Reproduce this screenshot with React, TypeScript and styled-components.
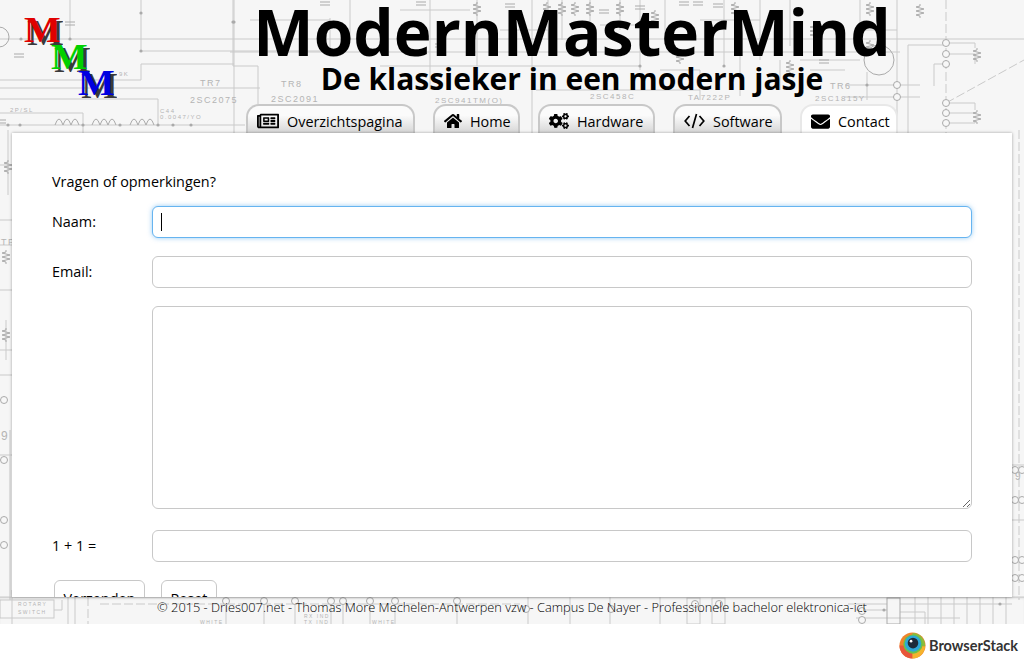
import React from 'react';
import styled, { createGlobalStyle } from 'styled-components';
import { FaRegNewspaper, FaHome, FaCogs, FaEnvelope } from 'react-icons/fa';

const GlobalStyle = createGlobalStyle`
    html, body {
        margin: 0;
        padding: 0;
        height: 664px;
        overflow: hidden;
        background: #fff;
        color: #000;
        font-family: "Open Sans", "Liberation Sans", sans-serif;
        font-size: 14.4px;
    }
`

// schematic wires: x1 y1 x2 y2
const wires = [
    [0,39,1024,39],[70,0,70,39],[141,0,141,51],[141,51,340,51],[0,88,260,88],[0,80,141,80],[141,64,141,80],[141,64,234,64],
    [234,0,234,134],[0,99,158,99],[158,99,158,125],[0,113,83,113],[83,113,83,134],[0,125,245,125],
    [233,0,233,66],[233,66,258,66],[258,66,258,104],[230,52,900,52],[330,18,330,50],[532,0,532,134],[430,0,430,52],
    [477,0,477,66],[548,0,548,40],[562,0,562,40],[590,0,590,40],[620,0,620,30],[380,66,532,66],[532,66,640,66],
    [640,0,640,70],[665,0,665,44],[700,20,760,20],[724,0,724,66],[760,0,760,60],[790,0,790,46],[800,60,860,60],
    [845,85,920,85],[845,97,920,97],[867,72,867,100],[897,0,897,134],[908,45,908,134],[908,45,946,45],
    [946,43,975,43],[946,54,975,54],[946,64,934,64],[934,64,934,86],[975,43,975,48],[975,54,975,64],
    [946,103,975,103],[946,113,975,113],[946,123,975,123],[975,103,975,110],[975,122,975,123],
    [250,20,330,20],[350,0,350,40],[400,10,470,10],[500,30,548,30],[600,25,640,25],[660,70,700,70],[700,70,700,100],
    [740,50,740,96],[780,60,780,90],[810,70,845,70],[860,0,860,30],[860,30,897,30],[430,52,430,90],[536,90,700,90],
    [0,220,12,220],[0,245,12,245],[0,350,12,350],[0,455,12,455],[8,130,8,195],[6,320,6,360],[10,430,10,600],
    [1012,465,1024,465],[1012,520,1024,520],[0,165,12,165],[0,290,12,290],[0,375,12,375],
    [0,597,1024,597],[12,590,12,624],[54,610,62,610],[62,600,62,610],[68,597,68,624],[75,597,75,624],
    [226,597,226,624],[264,597,264,624],[295,597,295,624],[331,597,331,624],[343,597,343,624],[370,597,370,624],
    [395,597,395,624],[457,597,457,624],[528,597,528,624],[570,597,570,624],[610,597,610,624],[660,597,660,624],
    [900,604,1012,604],[915,597,915,624],[928,597,928,624],[941,597,941,624],[954,597,954,624],[967,597,967,624],
    [980,597,980,624],[993,597,993,624],[1006,597,1006,624],[848,604,887,604],[856,618,960,618],[855,610,887,610],
    [900,612,925,612],[925,612,925,624],
]

const dashed = [
    [946,0,946,134],[946,103,1024,60],[1019,130,1019,600],[88,597,88,624],[100,604,226,604],[226,604,520,604],
]

// small open nodes
const nodes = [
    [946,43],[946,54],[946,64],[946,103],[946,113],[946,123],[897,85],[897,97],
    [226,601],[264,601],[295,601],[331,601],[343,601],[370,601],[395,601],[457,601],[526,609],[611,609],[695,604],[719,604],[862,611],[862,620],
    [4,400],[4,460],[4,520],[4,545],[1015,470],[1022,470],[1015,500],[1022,500],[1015,560],[1015,578],[1022,560],[1022,578],
]

const dots = [[70,39],[141,13],[141,51],[234,22],[21,39],[8,125],[20,125],[83,125],[120,125],[158,125],[173,125],[191,125],[233,22],[640,66],[724,66],[867,85],[1000,604],[884,610]]

const resistors = [
    [477,2],[547,2],[562,2],[575,2],[590,2],[620,2],[870,2],[920,4],[814,24],[655,10],[977,48],[977,110],[8,160],[6,250],[6,328],[680,50],[870,40],[735,2],[790,60],
]

const caps = [[70,22],[19,54],[421,2],[325,2],[510,4],[640,6],[684,2],[698,2],[718,4],[440,44],[604,10],[824,60],[1,120]]

const labels: [number, number, string, number][] = [
    [200,86,'TR7',9],[190,103,'2SC2075',9],[281,87,'TR8',9],[271,102,'2SC2091',9],[435,103,'2SC941TM(O)',8],
    [590,99,'2SC458C',8],[688,100,'TA7222P',8],[815,101,'2SC1815Y',8],[830,89,'TR6',9],[160,113,'C44',6],
    [160,119,'0.0047/YO',6],[10,112,'2P/SL',6],[119,76,'9K',6],
    [18,606,'ROTARY',5],[18,614,'SWITCH',5],[304,618,'RX IND',5],[304,624,'TX IND',5],[200,624,'WHITE',5],[372,624,'WHITE',5],
    [1,440,'9',12],[1015,480,'9',10],[1,245,'TP',9],[246,122,'C46',6],
]

const resistorPath = (x: number, y: number) =>
    `M${x} ${y} l0 2 l-4 1 l8 2 l-8 2 l8 2 l-8 2 l4 1 l0 2`

const Schematic = () => (
    <BackgroundSvg width="1024" height="624" viewBox="0 0 1024 624">
        <g stroke="#cacaca" fill="none" strokeWidth="1">
            {wires.map((w, i) => <line key={i} x1={w[0]} y1={w[1]} x2={w[2]} y2={w[3]} />)}
            {dashed.map((w, i) => <line key={i} x1={w[0]} y1={w[1]} x2={w[2]} y2={w[3]} strokeDasharray="9 3" />)}
            {resistors.map((r, i) => <path key={i} d={resistorPath(r[0], r[1])} stroke="#aaa" />)}
            {caps.map((c, i) => (
                <path key={i} d={`M${c[0] - 5} ${c[1]} h10 M${c[0] - 5} ${c[1] + 3} h10`} stroke="#aaa" />
            ))}
            <circle cx="-1" cy="37" r="10" stroke="#aaa" />
            <circle cx="495" cy="124" r="11" />
            <circle cx="879" cy="60" r="15" stroke="#aaa" />
            <path d="M55 125 q4 -12 8 0 q4 -12 8 0 q4 -12 8 0 M92 125 q4 -12 8 0 q4 -12 8 0 q4 -12 8 0 M130 125 q4 -12 8 0 q4 -12 8 0 q4 -12 8 0" stroke="#aaa" />
            <rect x="0" y="600" width="54" height="18" />
            <rect x="687" y="598" width="13" height="26" />
            <rect x="712" y="598" width="13" height="26" />
            <rect x="887" y="598" width="13" height="26" stroke="#aaa" />
            {nodes.map((n, i) => <circle key={i} cx={n[0]} cy={n[1]} r="3.5" fill="#f7f7f7" stroke="#aaa" />)}
            {dots.map((d, i) => <circle key={i} cx={d[0]} cy={d[1]} r="1.6" fill="#aaa" stroke="none" />)}
        </g>
        <g fill="#b4b4b4" fontFamily="'Liberation Sans', sans-serif" letterSpacing="1.5">
            {labels.map((l, i) => <text key={i} x={l[0]} y={l[1]} fontSize={l[3]}>{l[2]}</text>)}
        </g>
    </BackgroundSvg>
)

const Logo = () => (
    <LogoBox>
        <LogoLetter $color="#e00000" $indent={0}>M</LogoLetter>
        <LogoLetter $color="#00d000" $indent={27}>M</LogoLetter>
        <LogoLetter $color="#0000e0" $indent={54}>M</LogoLetter>
    </LogoBox>
)

const CodeIcon = () => (
    <svg width="21" height="16" viewBox="0 0 21 16" fill="none" stroke="#000" strokeWidth="1.7">
        <path d="M5.5 3 L1.2 8 L5.5 13 M15.5 3 L19.8 8 L15.5 13 M12.5 1 L8.5 15" />
    </svg>
)

const tabs = [
    { label: 'Overzichtspagina', width: 169, icon: <FaRegNewspaper size={22} /> },
    { label: 'Home', width: 87, icon: <FaHome size={18} /> },
    { label: 'Hardware', width: 117, icon: <FaCogs size={20} /> },
    { label: 'Software', width: 109, icon: <CodeIcon /> },
    { label: 'Contact', width: 98, icon: <FaEnvelope size={19} />, active: true },
]

const BrowserStackMark = () => (
    <svg width="27" height="27" viewBox="0 0 28 28">
        <circle cx="14" cy="14" r="13.5" fill="#f0842c" />
        <path d="M14 1 a13 13 0 0 1 13 14 L14 14 Z" fill="#8dbb3c" />
        <path d="M14 27.5 a13.5 13.5 0 0 1 -13.5 -13.5 L14 14 Z" fill="#e8563a" />
        <path d="M27 15 a13.5 13.5 0 0 1 -13 12.5 L14 14 Z" fill="#f5b32c" />
        <circle cx="14.5" cy="12.5" r="10" fill="#6cc04a" />
        <circle cx="14.5" cy="12" r="8.5" fill="#2da8d8" />
        <circle cx="14.5" cy="11.5" r="5.5" fill="#1d2b3a" />
        <circle cx="12.5" cy="9.5" r="1.4" fill="#fff" />
    </svg>
)

export default function App() {
    return (
        <>
            <GlobalStyle />
            <Page>
                <Schematic />
                <Header>
                    <Logo />
                    <HeaderCenter>
                        <Title>ModernMasterMind</Title>
                        <Subtitle>De klassieker in een modern jasje</Subtitle>
                        <Tabs>
                            {tabs.map(t => (
                                <Tab key={t.label} $active={!!t.active} $width={t.width}>
                                    {t.icon}
                                    {t.label}
                                </Tab>
                            ))}
                        </Tabs>
                    </HeaderCenter>
                </Header>
                <Main>
                    <Intro>Vragen of opmerkingen?</Intro>
                    <Row>
                        <Label>Naam:</Label>
                        <FocusBox>
                            <Input $focused />
                            <Caret />
                        </FocusBox>
                    </Row>
                    <Row>
                        <Label>Email:</Label>
                        <Input />
                    </Row>
                    <Row>
                        <Label />
                        <TextArea />
                    </Row>
                    <Row>
                        <Label>1 + 1 =</Label>
                        <Input />
                    </Row>
                    <Buttons>
                        <Button type="button">Verzenden</Button>
                        <Button type="button">Reset</Button>
                    </Buttons>
                </Main>
                <Footer>© 2015 - Dries007.net - Thomas More Mechelen-Antwerpen vzw - Campus De Nayer - Professionele bachelor elektronica-ict</Footer>
            </Page>
            <BottomBar>
                <BrowserStackMark />
                <BrandName>BrowserStack</BrandName>
            </BottomBar>
        </>
    )
}

const Page = styled.div`
    position: relative;
    height: 624px;
    background: #f6f6f6;
    overflow: hidden;
    display: flex;
    flex-direction: column;
`

const BackgroundSvg = styled.svg`
    position: absolute;
    top: 0;
    left: 0;
`

const Header = styled.header`
    position: relative;
    display: flex;
    height: 133px;
    flex: none;
`

const LogoBox = styled.div`
    width: 120px;
    flex: none;
    padding: 17px 0 0 24px;
    box-sizing: border-box;
`

const LogoLetter = styled.div<{ $color: string; $indent: number }>`
    height: 26.5px;
    margin-left: ${p => p.$indent}px;
    font-family: "Liberation Serif", serif;
    font-weight: bold;
    font-size: 36px;
    line-height: 26.5px;
    color: ${p => p.$color};
    text-shadow: 3px 3px 0 #3a3a3a;
    transform: scaleX(1.08);
    transform-origin: left center;
`

const HeaderCenter = styled.div`
    flex: 1;
    display: flex;
    flex-direction: column;
    align-items: center;
`

const Title = styled.h1`
    margin: 0;
    font-size: 64px;
    line-height: 64px;
    font-weight: 700;
    white-space: nowrap;
`

const Subtitle = styled.h2`
    margin: 0;
    font-size: 30px;
    line-height: 30px;
    font-weight: 700;
    white-space: nowrap;
`

const Tabs = styled.nav`
    display: flex;
    gap: 18px;
    margin-top: auto;
`

const Tab = styled.div<{ $active: boolean; $width: number }>`
    display: flex;
    align-items: center;
    gap: 8px;
    width: ${p => p.$width}px;
    height: 29px;
    padding: 3px 0 0 9px;
    box-sizing: border-box;
    white-space: nowrap;
    border: 2px solid ${p => (p.$active ? '#e8e8e8' : '#c8c8c8')};
    border-bottom: 0;
    border-radius: 13px 13px 0 0;
    background: ${p => (p.$active ? '#fff' : 'linear-gradient(#fbfbfb 35%, #d6d6d6)')};
`

const Main = styled.main`
    position: relative;
    flex: none;
    height: 464px;
    margin: 0 12px;
    padding: 39px 40px 0;
    box-sizing: border-box;
    background: #fff;
    overflow: hidden;
    box-shadow: 0 0 3px rgba(0, 0, 0, 0.35);
`

const Intro = styled.p`
    margin: 0 0 15px;
    line-height: 19px;
`

const Row = styled.div`
    display: flex;
    margin-bottom: 18px;
`

const Label = styled.label`
    width: 100px;
    flex: none;
    line-height: 31px;
`

const Input = styled.input<{ $focused?: boolean }>`
    display: block;
    flex: 1;
    width: 100%;
    height: 32px;
    padding: 0 8px;
    box-sizing: border-box;
    border: 1px solid ${p => (p.$focused ? '#66b4f0' : '#c8c8c8')};
    border-radius: 6px;
    outline: none;
    background: #fff;
    box-shadow: ${p => (p.$focused ? '0 0 5px rgba(82, 168, 236, 0.6)' : 'none')};
`

const FocusBox = styled.div`
    position: relative;
    flex: 1;
`

const Caret = styled.span`
    position: absolute;
    left: 9px;
    top: 7px;
    width: 1px;
    height: 18px;
    background: #000;
`

const TextArea = styled.textarea`
    flex: 1;
    height: 203px;
    box-sizing: border-box;
    border: 1px solid #c8c8c8;
    border-radius: 6px;
    outline: none;
    resize: vertical;
    margin: 0 0 3px;
`

const Buttons = styled.div`
    display: flex;
    gap: 16px;
    padding-left: 2px;
`

const Button = styled.button`
    height: 36px;
    padding: 0 8.5px;
    border: 1px solid #c8c8c8;
    border-radius: 6px;
    background: #fff;
    color: #000;
    font-family: inherit;
    font-size: 14.4px;
`

const Footer = styled.footer`
    position: relative;
    flex: 1;
    text-align: center;
    font-size: 12.8px;
    font-weight: 300;
    line-height: 20px;
    box-shadow: inset 0 2px 2px rgba(0, 0, 0, 0.06);
`

const BottomBar = styled.div`
    display: flex;
    align-items: center;
    justify-content: flex-end;
    gap: 3px;
    height: 40px;
    padding: 3px 6px 0 0;
    box-sizing: border-box;
`

const BrandName = styled.span`
    font-family: "Lato", sans-serif;
    font-weight: 700;
    font-size: 14.5px;
    color: #333;
`
